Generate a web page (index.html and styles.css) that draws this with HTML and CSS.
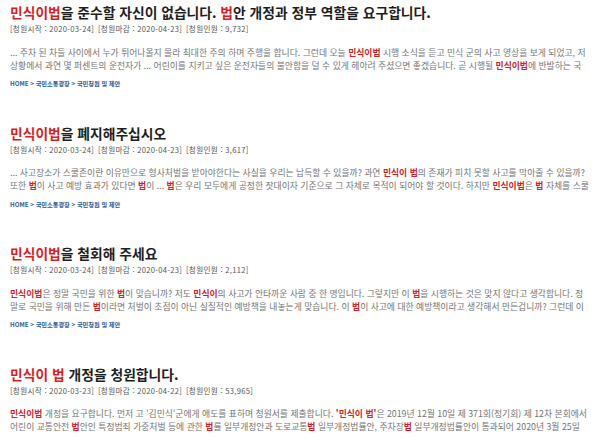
FILE: index.html
```html
<!DOCTYPE html>
<html lang="ko">
<head>
<meta charset="utf-8">
<link rel="stylesheet" href="styles.css">
</head>
<body>
<div class="list">
  <div class="item">
    <div class="title"><span class="hl">민식이법</span>을 준수할 자신이 없습니다. <span class="hl">법</span>안 개정과 정부 역할을 요구합니다.</div>
    <div class="meta"><span>[청원시작 : 2020-03-24]</span><span>[청원마감 : 2020-04-23]</span><span>[청원인원 : 9,732]</span></div>
    <div class="body">
      <div class="line">... 주차 된 차들 사이에서 누가 튀어나올지 몰라 최대한 주의 하며 주행을 합니다. 그런데 오늘 <b>민식이법</b> 시행 소식을 듣고 민식 군의 사고 영상을 보게 되었고, 저</div>
      <div class="line">상황에서 과연 몇 퍼센트의 운전자가 ... 어린이를 지키고 싶은 운전자들의 불안함을 덜 수 있게 헤아려 주셨으면 좋겠습니다. 곧 시행될 <b>민식이법</b>에 반발하는 국</div>
    </div>
    <div class="crumb">HOME &gt; 국민소통광장 &gt; 국민청원 및 제안</div>
  </div>
  <div class="item">
    <div class="title"><span class="hl">민식이법</span>을 폐지해주십시오</div>
    <div class="meta"><span>[청원시작 : 2020-03-24]</span><span>[청원마감 : 2020-04-23]</span><span>[청원인원 : 3,617]</span></div>
    <div class="body">
      <div class="line">... 사고장소가 스쿨존이란 이유만으로 형사처벌을 받아야한다는 사실을 우리는 납득할 수 있을까? 과연 <b>민식이 법</b>의 존재가 피치 못할 사고를 막아줄 수 있을까?</div>
      <div class="line">또한 <b>법</b>이 사고 예방 효과가 있다면 <b>법</b>이 ... <b>법</b>은 우리 모두에게 공정한 잣대이자 기준으로 그 자체로 목적이 되어야 할 것이다. 하지만 <b>민식이법</b>은 <b>법</b> 자체를 스쿨</div>
    </div>
    <div class="crumb">HOME &gt; 국민소통광장 &gt; 국민청원 및 제안</div>
  </div>
  <div class="item">
    <div class="title"><span class="hl">민식이법</span>을 철회해 주세요</div>
    <div class="meta"><span>[청원시작 : 2020-03-24]</span><span>[청원마감 : 2020-04-23]</span><span>[청원인원 : 2,112]</span></div>
    <div class="body">
      <div class="line"><b>민식이법</b>은 정말 국민을 위한 <b>법</b>이 맞습니까? 저도 <b>민식이</b>의 사고가 안타까운 사람 중 한 명입니다. 그렇지만 이 <b>법</b>을 시행하는 것은 맞지 않다고 생각합니다. 정</div>
      <div class="line">말로 국민을 위해 만든 <b>법</b>이라면 처벌이 초점이 아닌 실질적인 예방책을 내놓는게 맞습니다. 이 <b>법</b>이 사고에 대한 예방책이라고 생각해서 만든겁니까? 그런데 이</div>
    </div>
    <div class="crumb">HOME &gt; 국민소통광장 &gt; 국민청원 및 제안</div>
  </div>
  <div class="item">
    <div class="title"><span class="hl">민식이 법</span> 개정을 청원합니다.</div>
    <div class="meta"><span>[청원시작 : 2020-03-23]</span><span>[청원마감 : 2020-04-22]</span><span>[청원인원 : 53,965]</span></div>
    <div class="body">
      <div class="line"><b>민식이법</b> 개정을 요구합니다. 먼저 고 '김민식'군에게 애도를 표하며 청원서를 제출합니다. <b>'민식이 법'</b>은 2019년 12월 10일 제 371회(정기회) 제 12차 본회에서</div>
      <div class="line">어린이 교통안전 <b>법</b>안인 특정범죄 가중처벌 등에 관한 <b>법</b>률 일부개정안과 도로교통<b>법</b> 일부개정법률안, 주차장<b>법</b> 일부개정법률안이 통과되어 2020년 3월 25일</div>
    </div>
  </div>
</div>
</body>
</html>
```

FILE: styles.css
```css
html, body {
  margin: 0;
  padding: 0;
  background: #ffffff;
}

body {
  font-family: "Noto Sans CJK KR", "Noto Sans", sans-serif;
  overflow: hidden;
}

.list {
  padding: 0 0 0 10px;
}

.item {
  padding-top: 3px;
  margin-bottom: 32.5px;
}

.title {
  font-size: 13.8px;
  line-height: 18px;
  font-weight: 700;
  color: #1e1e1e;
  white-space: nowrap;
}

.title .hl {
  color: #d71f27;
}

.meta {
  margin-top: 3px;
  display: grid;
  grid-template-columns: 88px 88px auto;
  font-size: 7.6px;
  letter-spacing: 0.3px;
  line-height: 10px;
  color: #555555;
  white-space: nowrap;
}

.body {
  margin-top: 11.5px;
  font-size: 8.8px;
  line-height: 13px;
  color: #747474;
}

.line {
  white-space: nowrap;
}

.line b {
  color: #cf232b;
  font-weight: 700;
}

.crumb {
  margin-top: 8.5px;
  font-size: 6.2px;
  line-height: 8px;
  font-weight: 700;
  color: #2f5a96;
  white-space: nowrap;
}
```
